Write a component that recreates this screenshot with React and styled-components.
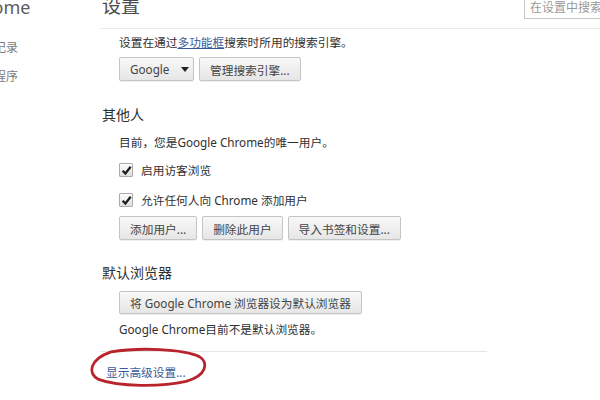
import React from "react";
import styled, { createGlobalStyle } from "styled-components";

const GlobalStyle = createGlobalStyle`
  html, body { margin: 0; padding: 0; background: #fff; overflow: hidden; }
  body { font-family: "Noto Sans", "Noto Sans CJK SC", sans-serif; color: #303030; }
`;

const Page = styled.div`
  display: flex;
  width: 600px;
  height: 400px;
  overflow: hidden;
`;

const Sidebar = styled.nav`
  flex: 0 0 128px;
  margin-left: -28px;
  margin-top: -4px;
  display: flex;
  flex-direction: column;
`;

const Brand = styled.div`
  font-size: 18px;
  line-height: 22px;
  color: #5c5c5c;
  margin-left: -9px;
`;

const NavItem = styled.div`
  font-size: 12px;
  line-height: 16px;
  color: #7a7a7a;
  margin-top: ${(p) => p.$gap}px;
  margin-left: ${(p) => p.$indent}px;
  white-space: nowrap;
`;

const Main = styled.main`
  flex: 1;
  display: flex;
  flex-direction: column;
  position: relative;
`;

const Header = styled.header`
  height: 28px;
  border-bottom: 1px solid #ebebeb;
  display: flex;
  justify-content: space-between;
  align-items: flex-end;
`;

const Title = styled.h1`
  margin: 0 0 11px 2px;
  font-size: 19px;
  line-height: 22px;
  font-weight: normal;
  color: #4a4a4a;
`;

const Search = styled.div`
  align-self: flex-start;
  margin-top: -4px;
  margin-right: -12px;
  width: 88px;
  height: 23px;
  border: 1px solid #c8c8c8;
  box-sizing: border-box;
  font-size: 12px;
  line-height: 22px;
  padding-left: 5px;
  color: #9a9a9a;
  white-space: nowrap;
  overflow: hidden;
`;

const Content = styled.div`
  display: flex;
  flex-direction: column;
  align-items: flex-start;
`;

const Section = styled.section`
  display: flex;
  flex-direction: column;
  align-items: flex-start;
  margin-top: ${(p) => p.$mt || 0}px;
`;

const SectionTitle = styled.h3`
  margin: 0 0 0 2px;
  font-size: 14px;
  line-height: 18px;
  font-weight: normal;
  color: #303030;
`;

const Body = styled.div`
  padding-left: 19px;
  display: flex;
  flex-direction: column;
  align-items: flex-start;
`;

const Text = styled.div`
  font-size: 11.7px;
  line-height: 16px;
  color: #303030;
  margin-top: ${(p) => p.$mt || 0}px;
  white-space: nowrap;
`;

const Link = styled.a`
  color: #3a5c9c;
  text-decoration: underline;
`;

const Row = styled.div`
  display: flex;
  gap: ${(p) => p.$gap || 5}px;
  margin-top: ${(p) => p.$mt || 0}px;
`;

const Button = styled.button`
  font-family: inherit;
  font-size: 11.7px;
  color: #444;
  height: ${(p) => p.$h || 24}px;
  width: ${(p) => (p.$w ? p.$w + "px" : "auto")};
  padding: 0 10px;
  border: 1px solid #c4c4c4;
  border-radius: 2px;
  background: linear-gradient(#f8f8f8, #e6e6e6);
  box-shadow: 0 1px 0 rgba(0, 0, 0, 0.06);
  display: flex;
  align-items: center;
  justify-content: ${(p) => p.$justify || "center"};
  gap: 12px;
  white-space: nowrap;
`;

const Arrow = styled.span`
  width: 0;
  height: 0;
  border-left: 4.5px solid transparent;
  border-right: 4.5px solid transparent;
  border-top: 5px solid #222;
`;

const CheckRow = styled.label`
  display: flex;
  align-items: center;
  gap: 8px;
  margin-top: ${(p) => p.$mt || 0}px;
  font-size: 11.7px;
  line-height: 16px;
  color: #303030;
`;

const Box = styled.span`
  width: 12px;
  height: 12px;
  border: 1px solid #ababab;
  border-radius: 1px;
  background: linear-gradient(#fdfdfd, #dedede);
  display: flex;
  align-items: center;
  justify-content: center;
`;

const Divider = styled.hr`
  width: 387px;
  margin: 14px 0 0 0;
  border: 0;
  border-top: 1px solid #e6e6e6;
`;

const AdvancedWrap = styled.div`
  position: relative;
  margin: 8px 0 0 6px;
`;

const AdvancedLink = styled.a`
  font-size: 11.7px;
  line-height: 16px;
  color: #3a5c9c;
  text-decoration: none;
  white-space: nowrap;
`;

const Ellipse = styled.svg`
  position: absolute;
  left: -18px;
  top: -11px;
  width: 122px;
  height: 38px;
  overflow: visible;
  pointer-events: none;
`;

const Check = () => (
  <svg width="11" height="11" viewBox="0 0 10 10">
    <path d="M1.5 5.2 L4 7.8 L8.8 1.6" fill="none" stroke="#1e1e1e" strokeWidth="2.1" />
  </svg>
);

export default function App() {
  return (
    <>
      <GlobalStyle />
      <Page>
        <Sidebar>
          <Brand>Chrome</Brand>
          <NavItem $gap={22} $indent={-2}>历史记录</NavItem>
          <NavItem $gap={13} $indent={-2}>扩展程序</NavItem>
        </Sidebar>
        <Main>
          <Header>
            <Title>设置</Title>
            <Search>在设置中搜索</Search>
          </Header>
          <Content>
            <Body>
              <Text $mt={5}>
                设置在通过<Link>多功能框</Link>搜索时所用的搜索引擎。
              </Text>
              <Row $mt={7}>
                <Button $w={75} $justify="space-between">
                  <span>Google</span>
                  <Arrow />
                </Button>
                <Button>管理搜索引擎...</Button>
              </Row>
            </Body>

            <Section $mt={25}>
              <SectionTitle>其他人</SectionTitle>
              <Body>
                <Text $mt={10}>目前，您是Google Chrome的唯一用户。</Text>
                <CheckRow $mt={12}>
                  <Box><Check /></Box>
                  启用访客浏览
                </CheckRow>
                <CheckRow $mt={14}>
                  <Box><Check /></Box>
                  允许任何人向 Chrome 添加用户
                </CheckRow>
                <Row $mt={8}>
                  <Button>添加用户...</Button>
                  <Button>删除此用户</Button>
                  <Button>导入书签和设置...</Button>
                </Row>
              </Body>
            </Section>

            <Section $mt={24}>
              <SectionTitle>默认浏览器</SectionTitle>
              <Body>
                <Row $mt={9}>
                  <Button $h={23}>将 Google Chrome 浏览器设为默认浏览器</Button>
                </Row>
                <Text $mt={7}>Google Chrome目前不是默认浏览器。</Text>
              </Body>
            </Section>

            <Divider />
            <AdvancedWrap>
              <AdvancedLink>显示高级设置...</AdvancedLink>
              <Ellipse viewBox="0 0 124 40">
                <path
                  d="M22 3 C52 -2 98 0 115 8 C125 14 123 28 101 34 C75 40 30 40 9 32 C-3 26 -1 11 22 3 Z"
                  fill="none"
                  stroke="#b8232c"
                  strokeWidth="3"
                />
              </Ellipse>
            </AdvancedWrap>
          </Content>
        </Main>
      </Page>
    </>
  );
}
